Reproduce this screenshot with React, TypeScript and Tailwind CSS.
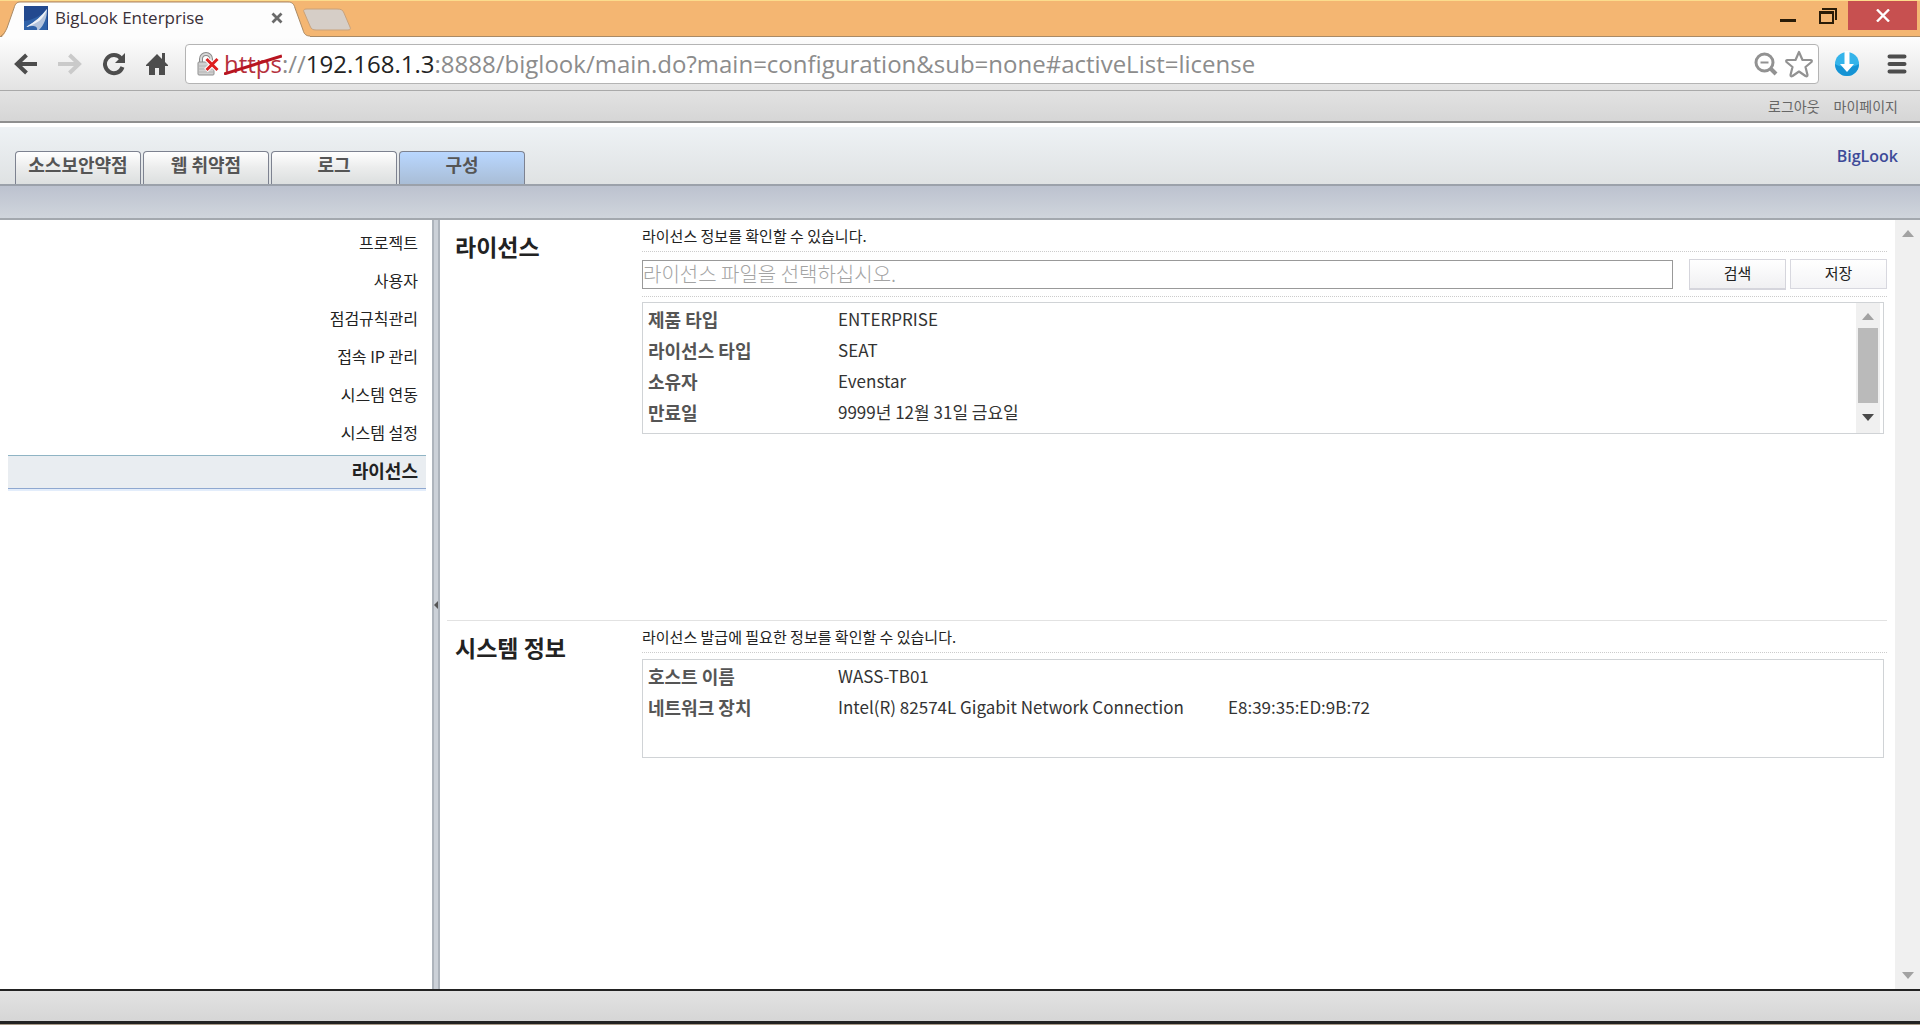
import { useState } from 'react';
import clsx from 'clsx';

const tabs = ['소스보안약점', '웹 취약점', '로그', '구성'];

const menuItems = ['프로젝트', '사용자', '점검규칙관리', '접속 IP 관리', '시스템 연동', '시스템 설정', '라이선스'];

const licenseRows = [
  ['제품 타입', 'ENTERPRISE'],
  ['라이선스 타입', 'SEAT'],
  ['소유자', 'Evenstar'],
  ['만료일', '9999년 12월 31일 금요일'],
];

const systemRows = [
  ['호스트 이름', 'WASS-TB01', ''],
  ['네트워크 장치', 'Intel(R) 82574L Gigabit Network Connection', 'E8:39:35:ED:9B:72'],
];

function TitleBar() {
  return (
    <header className="flex h-[37px] shrink-0 justify-between border-t border-b border-t-[#fcdc8c] border-b-[#a98a66] bg-[#f4b672]">
      <div className="flex">
        <div className="relative flex h-[37px] w-[310px] items-center pb-1 pl-6">
          <svg className="absolute inset-0" width="310" height="37" viewBox="0 0 310 37">
            <path d="M0 37C4 35 5 32 7 27L14 7C15 3 17 1 20 1H288C292 1 294 3 295 7L303 29C304 33 306 35 310 35V37Z" fill="#fdfdfd" />
            <path d="M1 35C4 33 5 31 7 27L14 7C15 3 17 1 20 1H288C292 1 294 3 295 7L303 29C304 33 306 35 310 35" fill="none" stroke="#a98a66" />
          </svg>
          <svg className="relative" width="24" height="24" viewBox="0 0 24 24">
            <rect width="24" height="24" fill="#22498f" />
            <path d="M0 15C9 14 17 10 23 3V24H0Z" fill="#2f62a8" />
            <path d="M23 3C18 10 11 16 2 21C9 19 14 20 13 24H15C20 19 23 12 23 3Z" fill="#b4c4dc" />
            <path d="M23 3C18 10 11 16 2 21C13 18 20 13 23 3Z" fill="#eef2f7" />
          </svg>
          <span className="relative ml-[7px] font-['Open_Sans',sans-serif] text-[17px] text-[#3a3038]">BigLook Enterprise</span>
          <button aria-label="탭 닫기" className="relative mr-[27px] ml-auto">
            <svg width="12" height="12" viewBox="0 0 12 12" stroke="#6a6a6a" strokeWidth="2.8">
              <path d="M1.500 1.500L10.500 10.500M10.500 1.500L1.500 10.500" />
            </svg>
          </button>
        </div>
        <button aria-label="새 탭" className="mt-[7px] -ml-2 h-6">
          <svg width="50" height="24" viewBox="0 0 50 24">
            <path d="M5 1H35C39 1 41 2 42 5L48 19C49 21 48 22 46 22H14C11 22 9 21 8 18L2 4C1 2 2 1 5 1Z" fill="#d6cec7" stroke="#c9a27b" />
          </svg>
        </button>
      </div>
      <div className="flex items-start pr-[3px]">
        <button aria-label="최소화" className="flex h-[29px] w-10 items-center justify-center">
          <svg width="16" height="20" viewBox="0 0 16 20"><path d="M0 14.500H16" stroke="#2a1c08" strokeWidth="3" /></svg>
        </button>
        <button aria-label="이전 크기로" className="flex h-[29px] w-10 items-center justify-center">
          <svg width="18" height="16" viewBox="0 0 18 16" fill="none" stroke="#2a1c08">
            <path d="M3 1H17V12" strokeWidth="2" />
            <path d="M1 4V15H14V4" strokeWidth="2" />
            <path d="M0 4.500H15" strokeWidth="3" />
          </svg>
        </button>
        <button aria-label="닫기" className="flex h-[29px] w-[69px] items-center justify-center bg-[#c75050]">
          <svg width="14" height="13" viewBox="0 0 14 13" stroke="#fff" strokeWidth="2.400">
            <path d="M1 .5L13 12.500M13 .5L1 12.500" />
          </svg>
        </button>
      </div>
    </header>
  );
}

function Toolbar() {
  return (
    <div className="flex h-[54px] shrink-0 items-center border-b border-[#a9a9a9] bg-linear-to-b from-[#fdfdfd] to-[#e3e3e3] pl-[14px]">
      <div className="flex items-center gap-5">
        <button aria-label="뒤로">
          <svg width="24" height="24" viewBox="0 0 24 24" fill="none" stroke="#4d4d4d" strokeWidth="4">
            <path d="M2.500 12H23" />
            <path d="M12.500 3L3 12L12.500 21" />
          </svg>
        </button>
        <button aria-label="앞으로">
          <svg width="24" height="24" viewBox="0 0 24 24" fill="none" stroke="#cacaca" strokeWidth="4">
            <path d="M0 12H20" />
            <path d="M11.500 3L21 12L11.500 21" />
          </svg>
        </button>
        <button aria-label="새로고침">
          <svg width="24" height="24" viewBox="0 0 24 24">
            <path d="M19 6.500A9 9 0 1 0 20.500 15" fill="none" stroke="#4d4d4d" strokeWidth="4" />
            <path d="M23 1V11H13Z" fill="#4d4d4d" />
          </svg>
        </button>
        <button aria-label="홈">
          <svg width="22" height="24" viewBox="0 0 22 24" fill="#4d4d4d">
            <path d="M11 2L0 13V14H3V23H9V16H13V23H19V14H22V13L19 10V1H16V7Z" />
          </svg>
        </button>
      </div>
      <div className="ml-[17px] flex h-10 flex-1 items-center rounded border border-[#b4b4b4] bg-white pr-[5px] pl-[11px]">
        <svg width="22" height="24" viewBox="0 0 22 24" fill="none">
          <path d="M4 11V7A5 5 0 0 1 14 7V11" stroke="#8a8a8a" strokeWidth="4" />
          <path d="M4 11V7A5 5 0 0 1 14 7V11" stroke="#d8d8d8" strokeWidth="2" />
          <rect x="1" y="10" width="16" height="13" rx="1" fill="#d0d0d0" stroke="#8f8f8f" />
          <path d="M2 14H16M2 17H16M2 20H16" stroke="#b4b4b4" />
          <path d="M9 6.500L21 18.500M21 6.500L9 18.500" stroke="#fff" strokeWidth="5" />
          <path d="M9.500 7L20.500 18M20.500 7L9.500 18" stroke="#dd1f1f" strokeWidth="3" />
        </svg>
        <div
          role="textbox"
          aria-label="주소"
          contentEditable
          suppressContentEditableWarning
          className="ml-[5px] flex-1 font-['Open_Sans',sans-serif] text-2xl whitespace-nowrap text-[#8c8c8c] outline-none"
        >
          <span className="relative text-[#b5303c]">
            https
            <svg className="absolute top-[6px] left-0 h-[22px] w-full" viewBox="0 0 57 22" preserveAspectRatio="none">
              <path d="M0 21L57 3" stroke="#b81420" strokeWidth="3" />
            </svg>
          </span>
          ://<span className="text-[#222]">192.168.1.3</span>:8888/biglook/main.do?main=configuration&amp;sub=none#activeList=license
        </div>
        <button aria-label="축소">
          <svg width="24" height="24" viewBox="0 0 24 24" fill="none" stroke="#929292">
            <circle cx="10.500" cy="10.500" r="8.500" strokeWidth="3" />
            <path d="M17 17L22 22" strokeWidth="4" />
            <path d="M6.500 10.500H14.500" strokeWidth="2" />
          </svg>
        </button>
        <button aria-label="북마크" className="ml-[7px]">
          <svg width="28" height="28" viewBox="0 0 28 28" fill="none" stroke="#929292" strokeWidth="2.200" strokeLinejoin="round">
            <path d="M14 2L17.500 10H26C27 10 27 11 26.500 12L20.500 17L22.500 25C22.500 26.500 21.500 26.500 20.500 26L14 21.500L7.500 26C6.500 26.500 5.500 26.500 5.500 25L7.500 17L1.500 12C1 11 1 10 2 10H10.500Z" />
          </svg>
        </button>
      </div>
      <button aria-label="다운로드" className="ml-[15px]">
        <svg width="26" height="26" viewBox="0 0 26 26">
          <circle cx="13" cy="13" r="12" fill="#35b4ea" />
          <path d="M1 13A12 12 0 0 0 25 13C20 17 6 17 1 13Z" fill="#1593d4" />
          <path d="M10.500 0H15.500V13H20L13 21L6 13H10.500Z" fill="#fff" />
        </svg>
      </button>
      <button aria-label="메뉴" className="mr-[13px] ml-[27px]">
        <svg width="20" height="22" viewBox="0 0 20 22" stroke="#4d4d4d" strokeWidth="4" strokeLinecap="round">
          <path d="M2.500 3.500H17.500M2.500 11H17.500M2.500 18.500H17.500" />
        </svg>
      </button>
    </div>
  );
}

function Arrow({ down, dark }: { down?: boolean; dark?: boolean }) {
  return (
    <svg width="12" height="7" viewBox="0 0 12 7" fill={dark ? '#4a4a4a' : '#a2a2a2'}>
      <path d={down ? 'M0 0H12L6 7Z' : 'M0 7H12L6 0Z'} />
    </svg>
  );
}

function InfoTable({ rows }: { rows: string[][] }) {
  return (
    <table className="ml-[5px] flex-1 self-start text-left">
      <tbody>
        {rows.map((row) => (
          <tr key={row[0]} className="h-[31px]">
            <th className="w-[190px] text-lg leading-6 font-bold text-[#555]">{row[0]}</th>
            <td className={clsx('text-[17px] leading-6 text-[#333]', row.length > 2 && 'w-[390px]')}>{row[1]}</td>
            {row.length > 2 && <td className="text-[17px] leading-6 text-[#333]">{row[2]}</td>}
          </tr>
        ))}
      </tbody>
    </table>
  );
}

function Section({ title, description, children }: { title: string; description: string; children: React.ReactNode }) {
  return (
    <section className="flex">
      <h2 className="w-[195px] shrink-0 pt-[10px] pl-2 text-[23px] leading-8 font-bold text-[#222]">{title}</h2>
      <div className="min-w-0 flex-1">
        <p className="h-8 border-b border-dotted border-[#ccc] text-[15px] leading-8 text-[#222]">{description}</p>
        {children}
      </div>
    </section>
  );
}

export default function App() {
  const [tab, setTab] = useState('구성');
  const [menu, setMenu] = useState('라이선스');

  return (
    <div className="flex h-screen flex-col bg-white font-['Noto_Sans_CJK_KR',sans-serif]">
      <TitleBar />
      <Toolbar />

      <div className="flex h-8 shrink-0 items-center justify-end gap-[14px] border-b-2 border-[#8f8f8f] bg-linear-to-b from-[#e2e2e2] to-[#d6d6d6] pr-[22px] text-sm text-[#666]">
        <a href="#logout">로그아웃</a>
        <a href="#mypage">마이페이지</a>
      </div>

      <div className="mt-1 flex h-[59px] shrink-0 items-end justify-between border-b-2 border-[#9ba1aa] bg-linear-to-b from-[#eef2f5] to-[#dfe2e3] pr-[22px] pl-[15px]">
        <nav className="flex gap-[2px]">
          {tabs.map((name) => (
            <button
              key={name}
              onClick={() => setTab(name)}
              className={clsx(
                'h-[33px] w-[126px] rounded-t border border-b-0 border-[#7d8290] pb-2 text-lg leading-6 font-bold text-[#555]',
                tab === name
                  ? 'bg-linear-to-b from-[#b9d7ff] to-[#a9bdd6]'
                  : 'bg-linear-to-b from-white via-[#ebecec] to-[#dcdfdf]'
              )}
            >
              {name}
            </button>
          ))}
        </nav>
        <span className="mb-4 font-['Open_Sans',sans-serif] text-base leading-6 font-semibold text-[#3d4a98]">BigLook</span>
      </div>
      <div className="h-[34px] shrink-0 border-b-2 border-[#a3a8ae] bg-linear-to-b from-[#bcc2cf] to-[#d0d5dc]" />

      <div className="flex min-h-0 flex-1">
        <aside className="w-[432px] shrink-0 pt-[7px] pr-[6px] pl-2">
          <ul className="space-y-1">
            {menuItems.map((name) => (
              <li key={name}>
                <a
                  href={`#${name}`}
                  onClick={() => setMenu(name)}
                  className={clsx(
                    'block h-[34px] border-y pr-2 text-right leading-7 text-[#222]',
                    menu === name
                      ? 'border-t-[#8fb4c4] border-b-[#8fa8d0] bg-[#e9edf1] text-lg/7 font-bold shadow-[0_2px_0_#e3edfb]'
                      : 'border-transparent text-base/7'
                  )}
                >
                  {name}
                </a>
              </li>
            ))}
          </ul>
        </aside>

        <div className="flex w-2 shrink-0 items-center border-x-2 border-[#aeb4bc] bg-[#ccd1d8]">
          <svg width="4" height="8" viewBox="0 0 4 8"><path d="M4 0V8L0 4Z" fill="#555" /></svg>
        </div>

        <main className="min-w-0 flex-1 pr-2 pl-[7px]">
          <div className="min-h-[400px]">
            <Section title="라이선스" description="라이선스 정보를 확인할 수 있습니다.">
              <div className="flex h-[45px] items-center border-b border-dotted border-[#ccc]">
                <input
                  aria-label="라이선스 파일"
                  placeholder="라이선스 파일을 선택하십시오."
                  className="h-[29px] min-w-0 flex-1 border border-[#999] bg-white pb-[2px] text-xl font-light text-[#333] placeholder:text-[#a3a3a3]"
                />
                <button className="ml-4 h-[31px] w-[97px] border border-b-2 border-[#d5d5dc] bg-linear-to-b from-white to-[#f0f0f2] pb-[2px] text-[15px] leading-6 text-[#222]">
                  검색
                </button>
                <button className="ml-1 h-[30px] w-[97px] border border-[#d8d8df] bg-linear-to-b from-white to-[#f4f4f6] pb-[2px] text-[15px] leading-6 text-[#222]">
                  저장
                </button>
              </div>
              <div className="mt-[5px] mr-[3px] flex h-[132px] border border-[#d0d3d6]">
                <InfoTable rows={licenseRows} />
                <div className="mr-[3px] flex w-6 flex-col items-center bg-[#f0f0f0] pt-[10px] pb-3">
                  <Arrow />
                  <div className="mt-2 mb-[11px] w-5 flex-1 bg-[#bababa]" />
                  <Arrow down dark />
                </div>
              </div>
            </Section>
          </div>

          <div className="border-t border-[#e2e2e2]">
            <Section title="시스템 정보" description="라이선스 발급에 필요한 정보를 확인할 수 있습니다.">
              <div className="mt-[6px] mr-[3px] flex h-[99px] border border-[#d0d3d6]">
                <InfoTable rows={systemRows} />
              </div>
            </Section>
          </div>
        </main>

        <div className="flex w-[25px] shrink-0 flex-col items-center justify-between bg-[#f0f0f0] py-[10px]">
          <Arrow />
          <Arrow down />
        </div>
      </div>

      <footer className="h-[36px] shrink-0 border-b border-[#a89a88]">
        <div className="h-[35px] border-t-2 border-b-3 border-[#222] bg-linear-to-b from-[#e2e2e2] to-[#d6d6d6]" />
      </footer>
    </div>
  );
}
